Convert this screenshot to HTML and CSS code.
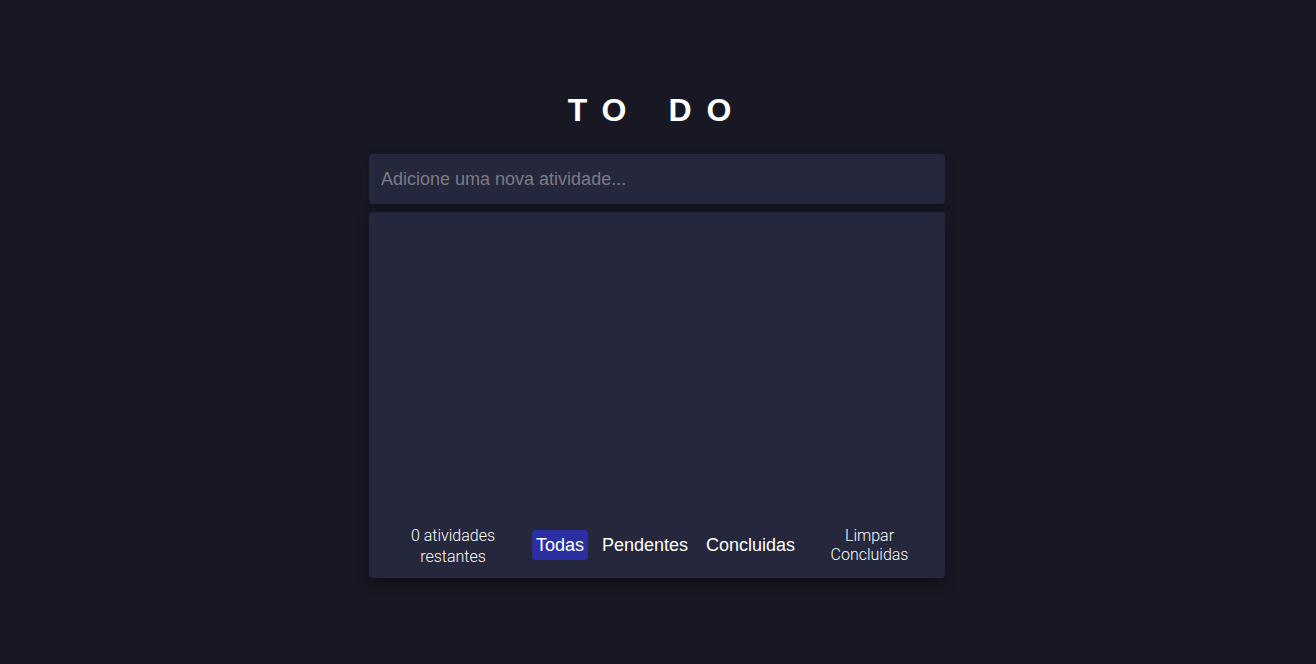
FILE: index.html
```html
<!DOCTYPE html>
<html lang="pt">
<head>
<meta charset="utf-8">
<title>TODO</title>
<link rel="stylesheet" href="styles.css">
</head>
<body>
<main class="app">
  <h1 class="title">TO DO</h1>
  <input class="new-todo" type="text" placeholder="Adicione uma nova atividade...">
  <section class="card">
    <ul class="list"></ul>
    <footer class="footer">
      <p class="count">0 atividades restantes</p>
      <div class="filters">
        <button class="filter active">Todas</button>
        <button class="filter">Pendentes</button>
        <button class="filter">Concluidas</button>
      </div>
      <button class="clear">Limpar Concluidas</button>
    </footer>
  </section>
</main>
</body>
</html>
```

FILE: styles.css
```css
* { box-sizing: border-box; }
html, body { margin: 0; padding: 0; }
body {
  background: #181824;
  font-family: "Liberation Sans", Arial, sans-serif;
  color: #fff;
  min-height: 664px;
  padding-right: 2px;
}
.app {
  width: 576px;
  margin: 0 auto;
  padding-top: 92px;
  display: flex;
  flex-direction: column;
}
.title {
  margin: 0 0 26px;
  text-align: center;
  font-size: 32px;
  font-weight: 700;
  letter-spacing: 15px;
  word-spacing: 3px;
  line-height: 36px;
  color: #fff;
}
.new-todo {
  height: 50px;
  width: 100%;
  border: none;
  outline: none;
  border-radius: 4px;
  background: #25273c;
  color: #fff;
  font-family: "Liberation Sans", Arial, sans-serif;
  font-size: 18px;
  padding: 0 12px;
  margin: 0 0 8px;
  box-shadow: 0 4px 10px rgba(0, 0, 0, 0.25);
}
.new-todo::placeholder { color: #7b7c85; }
.card {
  background: #25273c;
  border-radius: 4px;
  box-shadow: 0 6px 12px rgba(0, 0, 0, 0.35);
  display: flex;
  flex-direction: column;
}
.list {
  margin: 0;
  padding: 0;
  list-style: none;
  height: 300px;
}
.footer {
  height: 66px;
  display: grid;
  grid-template-columns: 136px 1fr 119px;
  column-gap: 10px;
  align-items: center;
  padding: 0 16px;
}
.count {
  margin: 0;
  padding: 2px 16px 0;
  text-align: center;
  font-family: Roboto, "Liberation Sans", sans-serif;
  font-weight: 300;
  font-size: 16px;
  line-height: 21px;
  color: #fff;
}
.filters {
  display: flex;
  gap: 10px;
  justify-content: center;
}
.filter {
  font-family: "Liberation Sans", Arial, sans-serif;
  font-size: 18px;
  color: #fff;
  background: transparent;
  border: none;
  border-radius: 3px;
  padding: 0 4px;
  height: 30px;
  cursor: pointer;
}
.filter.active { background: #2b2fa2; }
.clear {
  font-family: Roboto, "Liberation Sans", sans-serif;
  font-weight: 300;
  font-size: 16px;
  line-height: 19px;
  color: #fff;
  background: transparent;
  border: none;
  padding: 0 12px;
  text-align: center;
  cursor: pointer;
}
```
